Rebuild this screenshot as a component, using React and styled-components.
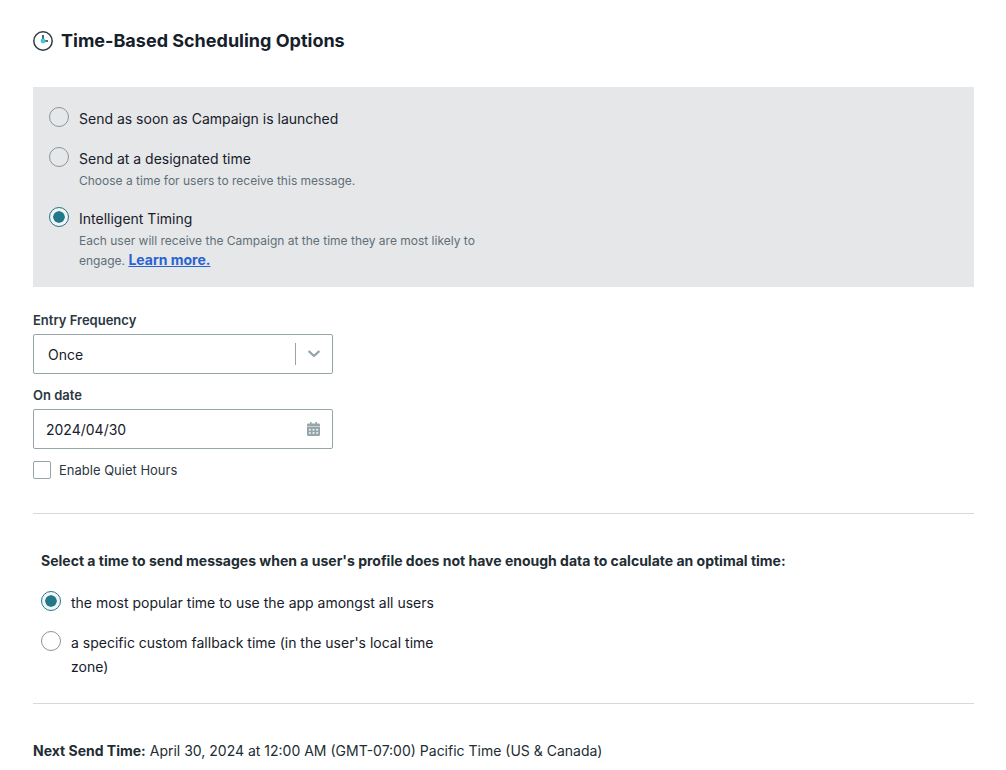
import React, { useState } from "react";
import styled, { createGlobalStyle } from "styled-components";

const GlobalStyle = createGlobalStyle`
  *, *::before, *::after { box-sizing: border-box; }
  body {
    margin: 0;
    background: #ffffff;
    color: #16202a;
    font-family: Inter, "Liberation Sans", sans-serif;
    font-size: 14px;
    line-height: 24px;
  }
`;

const Page = styled.main`
  padding: 28px 32px 0 33px;
`;

const Heading = styled.h1`
  display: flex;
  align-items: center;
  gap: 8px;
  margin: 0 0 33px;
  font-size: 18px;
  line-height: 26px;
  font-weight: 700;
  color: #16202a;
`;

const Panel = styled.section`
  display: flex;
  flex-direction: column;
  gap: 16px;
  padding: 20px 16px 16px;
  background: #e6e7e9;
`;

const OptionRow = styled.div`
  display: flex;
  align-items: flex-start;
  gap: 10px;
`;

const Radio = styled.input`
  appearance: none;
  flex: none;
  width: 20px;
  height: 20px;
  margin: 0;
  padding: 3px;
  border: 1px solid #8a959c;
  border-radius: 50%;
  background-clip: content-box;

  &:checked {
    border-color: #20788a;
    background-color: #20788a;
    box-shadow: inset 0 0 0 3px #f3f4f5;
  }
`;

const OptionBody = styled.div`
  max-width: ${(p) => p.$width}px;
`;

const OptionLabel = styled.label`
  display: block;
`;

const Description = styled.p`
  margin: 0;
  font-size: 12px;
  line-height: 20px;
  color: #5f6f78;
`;

const LearnLink = styled.a`
  font-size: 14px;
  line-height: 16px;
  font-weight: 700;
  color: #2a62d2;
`;

const Fields = styled.section`
  padding: 23px 0 33px;
  border-bottom: 1px solid #d6d9db;
`;

const Field = styled.div`
  max-width: 300px;
  margin-bottom: 11px;
`;

const FieldLabel = styled.label`
  display: block;
  margin-bottom: 4px;
  font-size: 13px;
  line-height: 20px;
  font-weight: 600;
  color: #2b3742;
`;

const Control = styled.div`
  position: relative;
  display: flex;
`;

const controlStyle = `
  appearance: none;
  width: 100%;
  height: 40px;
  border: 1px solid #96a5aa;
  border-radius: 2px;
  background: #ffffff;
  color: #16202a;
  font-family: inherit;
  font-size: 14px;
`;

const Select = styled.select`
  ${controlStyle}
  padding: 0 44px 0 14px;
`;

const TextInput = styled.input`
  ${controlStyle}
  padding: 0 40px 0 12px;
`;

const Adornment = styled.span`
  position: absolute;
  top: 9px;
  right: 0;
  bottom: 9px;
  display: flex;
  align-items: center;
  justify-content: center;
  width: 38px;
  padding-right: 2px;
  border-left: 1px solid ${(p) => (p.$divided ? "#96a5aa" : "transparent")};
  color: #96a5aa;
  pointer-events: none;
`;

const CheckRow = styled.div`
  display: flex;
  align-items: center;
  gap: 8px;
`;

const Checkbox = styled.input`
  appearance: none;
  width: 18px;
  height: 18px;
  margin: 0;
  border: 1px solid #96a5aa;
  border-radius: 2px;
  background: #ffffff;

  &:checked {
    border-color: #20788a;
    background: #20788a;
    box-shadow: inset 0 0 0 3px #ffffff;
  }
`;

const CheckLabel = styled.label`
  font-size: 13px;
  line-height: 20px;
  color: #2b3742;
`;

const Fallback = styled.section`
  display: flex;
  flex-direction: column;
  gap: 16px;
  padding: 35px 8px 24px;
  border-bottom: 1px solid #d6d9db;
`;

const SubHeading = styled.h2`
  margin: 0 0 2px;
  font-size: 14px;
  line-height: 24px;
  font-weight: 700;
  color: #222c33;
`;

const NextSend = styled.p`
  margin: 0;
  padding: 35px 0 0;
  color: #222c33;
`;

const ClockIcon = () => (
  <svg width="20" height="20" viewBox="0 0 20 20" fill="none" aria-hidden="true">
    <circle cx="10" cy="10" r="9.2" stroke="#2f3c46" strokeWidth="1.5" />
    <path d="M10 4v6h5" stroke="#2f3c46" strokeWidth="1.6" />
    <circle cx="10" cy="10" r="2.4" fill="#3accdd" />
  </svg>
);

const ChevronIcon = () => (
  <svg width="12" height="8" viewBox="0 0 12 8" fill="none" aria-hidden="true">
    <path d="M1.3 1.6L6 6l4.700-4.400" stroke="currentColor" strokeWidth="2.200" strokeLinecap="round" strokeLinejoin="round" />
  </svg>
);

const CalendarIcon = () => (
  <svg width="13" height="14" viewBox="0 0 13 14" aria-hidden="true">
    <path
      fill="currentColor"
      fillRule="evenodd"
      d="M3 0h1.600v1.600h3.800V0H10v1.600h1.600A1.300 1.300 0 0 1 13 2.900V4H0V2.900a1.300 1.300 0 0 1 1.400-1.300H3z M0 4.600h13v8.100a1.300 1.300 0 0 1-1.300 1.300H1.300A1.300 1.300 0 0 1 0 12.700z M2 6.900v1.500h1.700V6.900z M5.600 6.900v1.500h1.800V6.900z M9.300 6.900v1.500H11V6.900z M2 10.300v1.500h1.700v-1.500z M5.600 10.300v1.500h1.800v-1.500z M9.300 10.300v1.500H11v-1.500z"
    />
  </svg>
);

function Option({ id, name, label, width, checked, onSelect, children }) {
  return (
    <OptionRow>
      <Radio type="radio" id={id} name={name} checked={checked} onChange={() => onSelect(id)} />
      <OptionBody $width={width}>
        <OptionLabel htmlFor={id}>{label}</OptionLabel>
        {children}
      </OptionBody>
    </OptionRow>
  );
}

export default function App() {
  const [timing, setTiming] = useState("intelligent");
  const [fallback, setFallback] = useState("popular");
  const [date, setDate] = useState("2024/04/30");

  return (
    <>
      <GlobalStyle />
      <Page>
        <Heading>
          <ClockIcon />
          Time-Based Scheduling Options
        </Heading>

        <Panel>
          <Option id="immediate" name="timing" width={400} checked={timing === "immediate"} onSelect={setTiming} label="Send as soon as Campaign is launched" />
          <Option id="designated" name="timing" width={400} checked={timing === "designated"} onSelect={setTiming} label="Send at a designated time">
            <Description>Choose a time for users to receive this message.</Description>
          </Option>
          <Option id="intelligent" name="timing" width={400} checked={timing === "intelligent"} onSelect={setTiming} label="Intelligent Timing">
            <Description>
              Each user will receive the Campaign at the time they are most likely to engage. <LearnLink href="#learn">Learn more.</LearnLink>
            </Description>
          </Option>
        </Panel>

        <Fields>
          <Field>
            <FieldLabel htmlFor="frequency">Entry Frequency</FieldLabel>
            <Control>
              <Select id="frequency" defaultValue="Once">
                <option>Once</option>
                <option>Daily</option>
                <option>Weekly</option>
                <option>Monthly</option>
              </Select>
              <Adornment $divided>
                <ChevronIcon />
              </Adornment>
            </Control>
          </Field>
          <Field>
            <FieldLabel htmlFor="date">On date</FieldLabel>
            <Control>
              <TextInput id="date" type="text" value={date} onChange={(e) => setDate(e.target.value)} />
              <Adornment>
                <CalendarIcon />
              </Adornment>
            </Control>
          </Field>
          <CheckRow>
            <Checkbox type="checkbox" id="quiet" />
            <CheckLabel htmlFor="quiet">Enable Quiet Hours</CheckLabel>
          </CheckRow>
        </Fields>

        <Fallback>
          <SubHeading>
            Select a time to send messages when a user's profile does not have enough data to calculate an optimal time:
          </SubHeading>
          <Option id="popular" name="fallback" width={380} checked={fallback === "popular"} onSelect={setFallback} label="the most popular time to use the app amongst all users" />
          <Option id="custom" name="fallback" width={380} checked={fallback === "custom"} onSelect={setFallback} label="a specific custom fallback time (in the user's local time zone)" />
        </Fallback>

        <NextSend>
          <strong>Next Send Time:</strong> April 30, 2024 at 12:00 AM (GMT-07:00) Pacific Time (US &amp; Canada)
        </NextSend>
      </Page>
    </>
  );
}
